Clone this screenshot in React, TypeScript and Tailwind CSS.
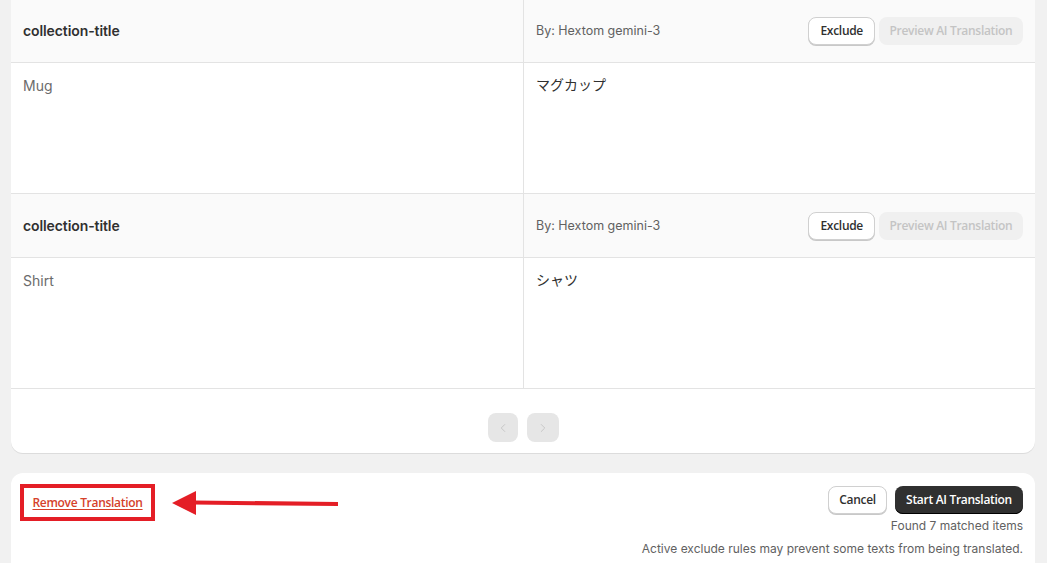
import { ChevronLeft, ChevronRight } from "lucide-react"

const rows = [
  { key: "collection-title", source: "Mug", target: "マグカップ" },
  { key: "collection-title", source: "Shirt", target: "シャツ" },
]

const btnFont = { fontFamily: '"Open Sans", "Liberation Sans", sans-serif' }

export default function App() {
  return (
    <div
      className="min-h-[563px] overflow-hidden bg-[#f1f1f1] pl-[11px] pr-[12px] text-[#303030]"
      style={{ fontFamily: 'Inter, "Noto Sans CJK JP", sans-serif' }}
    >
      {/* Translation table */}
      <div className="-mt-px overflow-hidden rounded-b-[12px] bg-white shadow-[0_1px_0_#dcdcdc]">
        {rows.map((row, i) => (
          <div key={i}>
            <div className="grid h-[64px] grid-cols-[513px_1fr] border-b border-[#e3e3e3] bg-[#fafafa]">
              <div className="flex items-center border-r border-[#e3e3e3] pl-[12px] text-[14px] font-semibold tracking-[-0.1px]">
                {row.key}
              </div>
              <div className="flex items-center justify-between pl-[12px] pr-[12px]">
                <span className="mt-[1px] text-[12.5px] text-[#616161]">By: Hextom gemini-3</span>
                <div className="flex items-center gap-[4px]" style={btnFont}>
                  <button className="h-[28px] rounded-[8px] border border-[#d0d0d0] bg-white px-[11px] text-[12px] font-semibold tracking-[-0.3px] text-[#303030] shadow-[0_1px_0_#c8c8c8]">
                    Exclude
                  </button>
                  <button className="h-[28px] w-[144px] rounded-[8px] bg-[#f0f0f0] text-[12px] font-semibold tracking-[-0.3px] text-[#c4c4c4]">
                    Preview AI Translation
                  </button>
                </div>
              </div>
            </div>
            <div className="grid h-[131px] grid-cols-[513px_1fr] border-b border-[#e3e3e3]">
              <div className="border-r border-[#e3e3e3] pl-[12px] pt-[12px] text-[14px] text-[#6b6b6b]">
                {row.source}
              </div>
              <div className="pl-[12px] pt-[11px] text-[14px] text-[#303030]">{row.target}</div>
            </div>
          </div>
        ))}
        <div className="flex h-[64px] items-start justify-center gap-[9px] pt-[24px]">
          <button className="flex h-[29px] w-[30px] items-center justify-center rounded-[8px] bg-[#e6e6e6] text-[#c2c2c2]">
            <ChevronLeft size={14} strokeWidth={1.5} />
          </button>
          <button className="flex h-[29px] w-[32px] items-center justify-center rounded-[8px] bg-[#e6e6e6] text-[#c2c2c2]">
            <ChevronRight size={14} strokeWidth={1.5} />
          </button>
        </div>
      </div>

      {/* Footer actions */}
      <div className="mt-[20px] h-[100px] rounded-t-[12px] bg-white pl-[9px] pr-[12px] pt-[11px]">
        <div className="flex items-start justify-between">
          <div className="flex items-center">
            <div className="flex h-[37px] w-[135px] items-center justify-center border-[4px] border-[#e41e26]">
              <a
                href="#"
                className="text-[12px] font-semibold tracking-[-0.3px] text-[#d5412b] underline underline-offset-2"
                style={btnFont}
              >
                Remove Translation
              </a>
            </div>
            <svg width="170" height="28" viewBox="0 0 170 28" className="ml-[15px]">
              <polygon points="2,14 26,2 26,26" fill="#e41e26" />
              <line x1="24" y1="13.5" x2="168" y2="15" stroke="#e41e26" strokeWidth="4" />
            </svg>
          </div>
          <div className="flex flex-col items-end pt-[2px]">
            <div className="flex items-center gap-[8px]" style={btnFont}>
              <button className="h-[28px] w-[59px] rounded-[8px] border border-[#d0d0d0] bg-white text-[12px] font-semibold tracking-[-0.3px] text-[#303030] shadow-[0_1px_0_#c8c8c8]">
                Cancel
              </button>
              <button className="h-[28px] w-[128px] rounded-[8px] bg-[#303030] text-[12px] font-semibold tracking-[-0.3px] text-white shadow-[inset_0_-1px_0_#000]">
                Start AI Translation
              </button>
            </div>
            <div className="mt-[4px] text-[12px] leading-[16px] text-[#616161]">Found 7 matched items</div>
            <div className="mt-[7px] text-[12px] leading-[16px] text-[#616161]">
              Active exclude rules may prevent some texts from being translated.
            </div>
          </div>
        </div>
      </div>
    </div>
  )
}
